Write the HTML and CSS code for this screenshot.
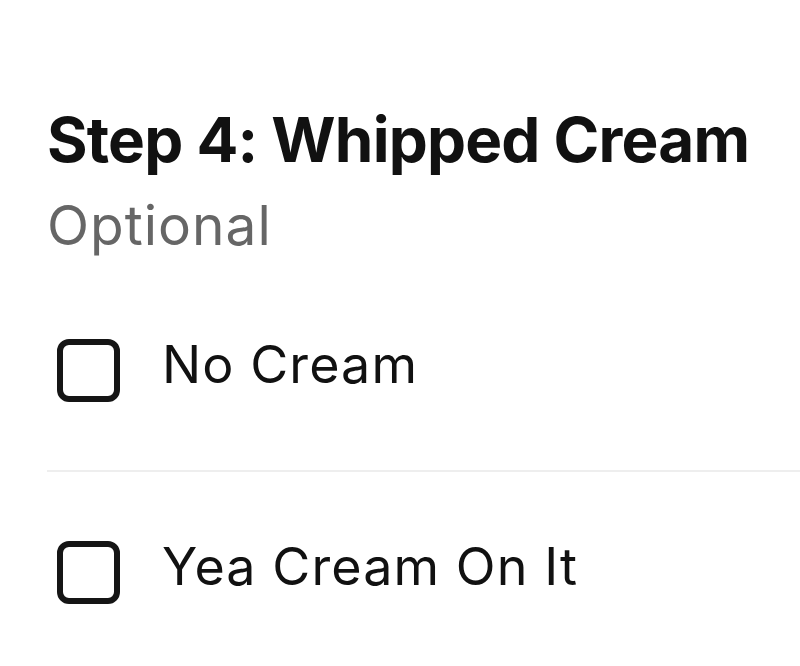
FILE: index.html
```html
<!DOCTYPE html>
<html>
<head>
<meta charset="utf-8">
<link rel="stylesheet" href="styles.css">
</head>
<body>
<section class="panel">
  <h1 class="title">Step 4: Whipped Cream</h1>
  <div class="sub">Optional</div>
  <ul class="options">
    <li class="option"><span class="box"></span><span class="label">No Cream</span></li>
    <li class="option"><span class="box"></span><span class="label">Yea Cream On It</span></li>
  </ul>
</section>
</body>
</html>
```
FILE: styles.css
```css
html, body {
  margin: 0;
  padding: 0;
  background: #fff;
}
body {
  font-family: Inter, Lato, "Liberation Sans", sans-serif;
  color: #111;
  overflow: hidden;
}
.panel {
  padding: 102px 0 0 47px;
}
.title {
  margin: 0;
  font-size: 62px;
  line-height: 76px;
  font-weight: 700;
  letter-spacing: -0.8px;
  color: #111;
}
.sub {
  margin-top: 14px;
  font-size: 55px;
  line-height: 66px;
  letter-spacing: 1px;
  color: #666;
}
.options {
  list-style: none;
  margin: 12px 0 0 0;
  padding: 0;
}
.option {
  display: flex;
  align-items: center;
  height: 200px;
  padding-left: 10px;
  border-bottom: 2px solid #eeeeee;
}
.option:last-child {
  border-bottom: none;
}
.box {
  width: 63px;
  height: 63px;
  box-sizing: border-box;
  border: 6px solid #151515;
  border-radius: 12px;
  flex: none;
}
.label {
  margin-left: 42px;
  font-size: 52px;
  line-height: 52px;
  letter-spacing: 1.1px;
  margin-bottom: 10px;
}
```
